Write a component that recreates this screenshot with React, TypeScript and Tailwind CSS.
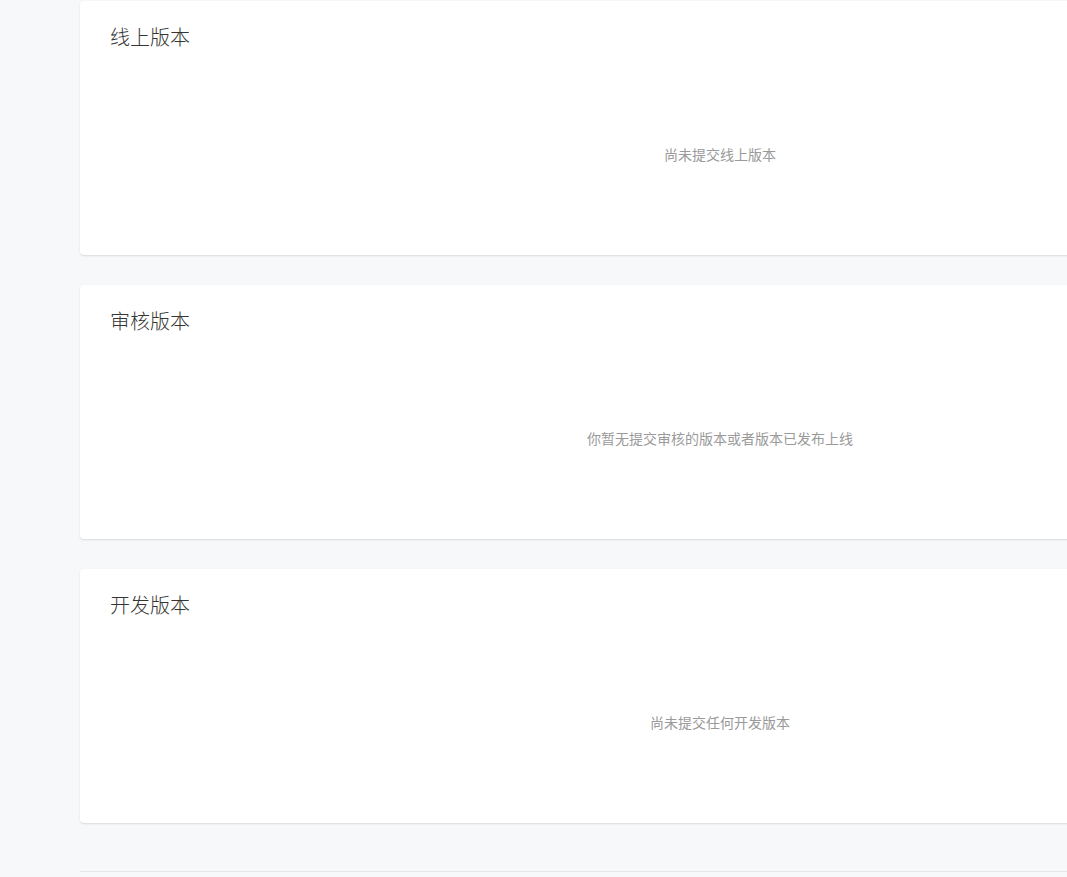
import React from "react";

const sections = [
  { title: "线上版本", empty: "尚未提交线上版本" },
  { title: "审核版本", empty: "你暂无提交审核的版本或者版本已发布上线" },
  { title: "开发版本", empty: "尚未提交任何开发版本" },
];

export default function App() {
  return (
    <div
      className="w-screen h-screen overflow-hidden bg-[#f7f8fa]"
      style={{ fontFamily: '"Noto Sans CJK SC", "Noto Sans", sans-serif' }}
    >
      <div className="pl-[80px] pt-[1px] w-[1360px]">
        <div className="flex flex-col gap-[30px]">
          {sections.map((s) => (
            <div
              key={s.title}
              className="h-[254px] w-[1280px] bg-white rounded-[4px] shadow-[0_1px_2px_rgba(0,0,0,0.12)] flex flex-col"
            >
              <div className="px-[30px] pt-[23px] text-[20px] leading-[26px] font-light text-[#353535]">
                {s.title}
              </div>
              <div className="flex-1 flex items-center justify-center pt-[3px] text-[14px] text-[#9a9a9a]">
                {s.empty}
              </div>
            </div>
          ))}
        </div>
        <div className="mt-[48px] h-px w-[1280px] bg-[#e4e6ea]" />
      </div>
    </div>
  );
}
